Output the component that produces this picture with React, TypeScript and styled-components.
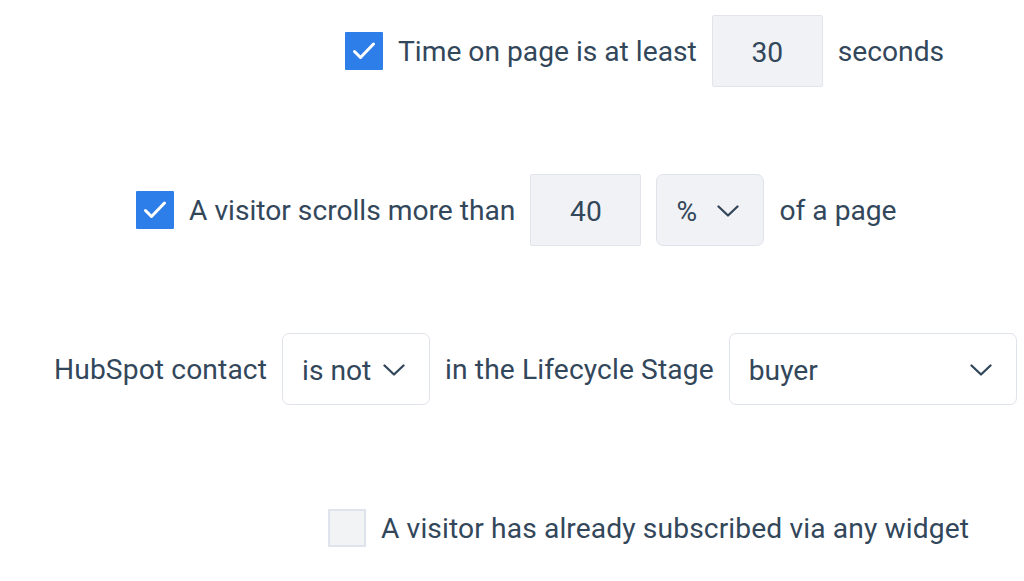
import React from 'react';
import styled, { createGlobalStyle } from 'styled-components';

const GlobalStyle = createGlobalStyle`
  html, body {
    margin: 0;
    padding: 0;
    background: #ffffff;
  }
  body {
    font-family: Roboto, "Liberation Sans", sans-serif;
    color: #33475b;
  }
`;

const Page = styled.div`
  width: 1024px;
  height: 581px;
  padding-top: 15px;
  box-sizing: border-box;
  display: flex;
  flex-direction: column;
  gap: 87px;
  overflow: hidden;
`;

const Row = styled.div<{ $indent: number }>`
  display: flex;
  align-items: center;
  gap: 15px;
  height: 72px;
  padding-left: ${({ $indent }) => $indent}px;
`;

const Label = styled.span<{ $wide?: boolean }>`
  font-size: 28.2px;
  line-height: 1;
  padding-top: 2px;
  letter-spacing: ${({ $wide }) => ($wide ? '0.12px' : '0')};
  color: #33475b;
  white-space: nowrap;
`;

const Check = styled.span<{ $checked?: boolean }>`
  width: 38px;
  height: 38px;
  box-sizing: border-box;
  display: inline-flex;
  align-items: center;
  justify-content: center;
  flex-shrink: 0;
  border-radius: 1px;
  background: ${({ $checked }) => ($checked ? '#2d7ee8' : '#f1f3f5')};
  border: 2px solid ${({ $checked }) => ($checked ? '#2d7ee8' : '#dfe3eb')};
`;

const NumberBox = styled.span`
  width: 111px;
  height: 72px;
  box-sizing: border-box;
  display: inline-flex;
  align-items: center;
  justify-content: center;
  padding-top: 2px;
  background: #f0f2f5;
  border: 1.5px solid #e1e5eb;
  border-radius: 2px;
  font-size: 28.2px;
  color: #33475b;
`;

const Select = styled.span<{ $width: number; $filled?: boolean }>`
  width: ${({ $width }) => $width}px;
  height: 72px;
  box-sizing: border-box;
  display: inline-flex;
  align-items: center;
  justify-content: space-between;
  padding: 2px 24px 0 19px;
  background: ${({ $filled }) => ($filled ? '#f0f2f5' : '#ffffff')};
  border: 1.5px solid #dfe3eb;
  border-radius: 7px;
  font-size: 28.2px;
  color: #33475b;
`;

const Chevron = () => (
  <svg width="22" height="12" viewBox="0 0 22 12" fill="none">
    <path d="M1.5 1.5 L11 10.5 L20.5 1.5" stroke="#33475b" strokeWidth="2.3" strokeLinecap="round" strokeLinejoin="round" />
  </svg>
);

const Tick = () => (
  <svg width="24" height="18" viewBox="0 0 24 18" fill="none">
    <path d="M2.5 9.5 L8.5 15.5 L21.5 2" stroke="#ffffff" strokeWidth="3" strokeLinecap="round" strokeLinejoin="round" />
  </svg>
);

export default function App() {
  return (
    <>
      <GlobalStyle />
      <Page>
        <Row $indent={345}>
          <Check $checked>
            <Tick />
          </Check>
          <Label>Time on page is at least</Label>
          <NumberBox>30</NumberBox>
          <Label>seconds</Label>
        </Row>
        <Row $indent={136}>
          <Check $checked>
            <Tick />
          </Check>
          <Label>A visitor scrolls more than</Label>
          <NumberBox>40</NumberBox>
          <Select $width={108} $filled>
            %
            <Chevron />
          </Select>
          <Label>of a page</Label>
        </Row>
        <Row $indent={54}>
          <Label $wide>HubSpot contact</Label>
          <Select $width={148}>
            is not
            <Chevron />
          </Select>
          <Label $wide>in the Lifecycle Stage</Label>
          <Select $width={288}>
            buyer
            <Chevron />
          </Select>
        </Row>
        <Row $indent={328}>
          <Check />
          <Label $wide>A visitor has already subscribed via any widget</Label>
        </Row>
      </Page>
    </>
  );
}
